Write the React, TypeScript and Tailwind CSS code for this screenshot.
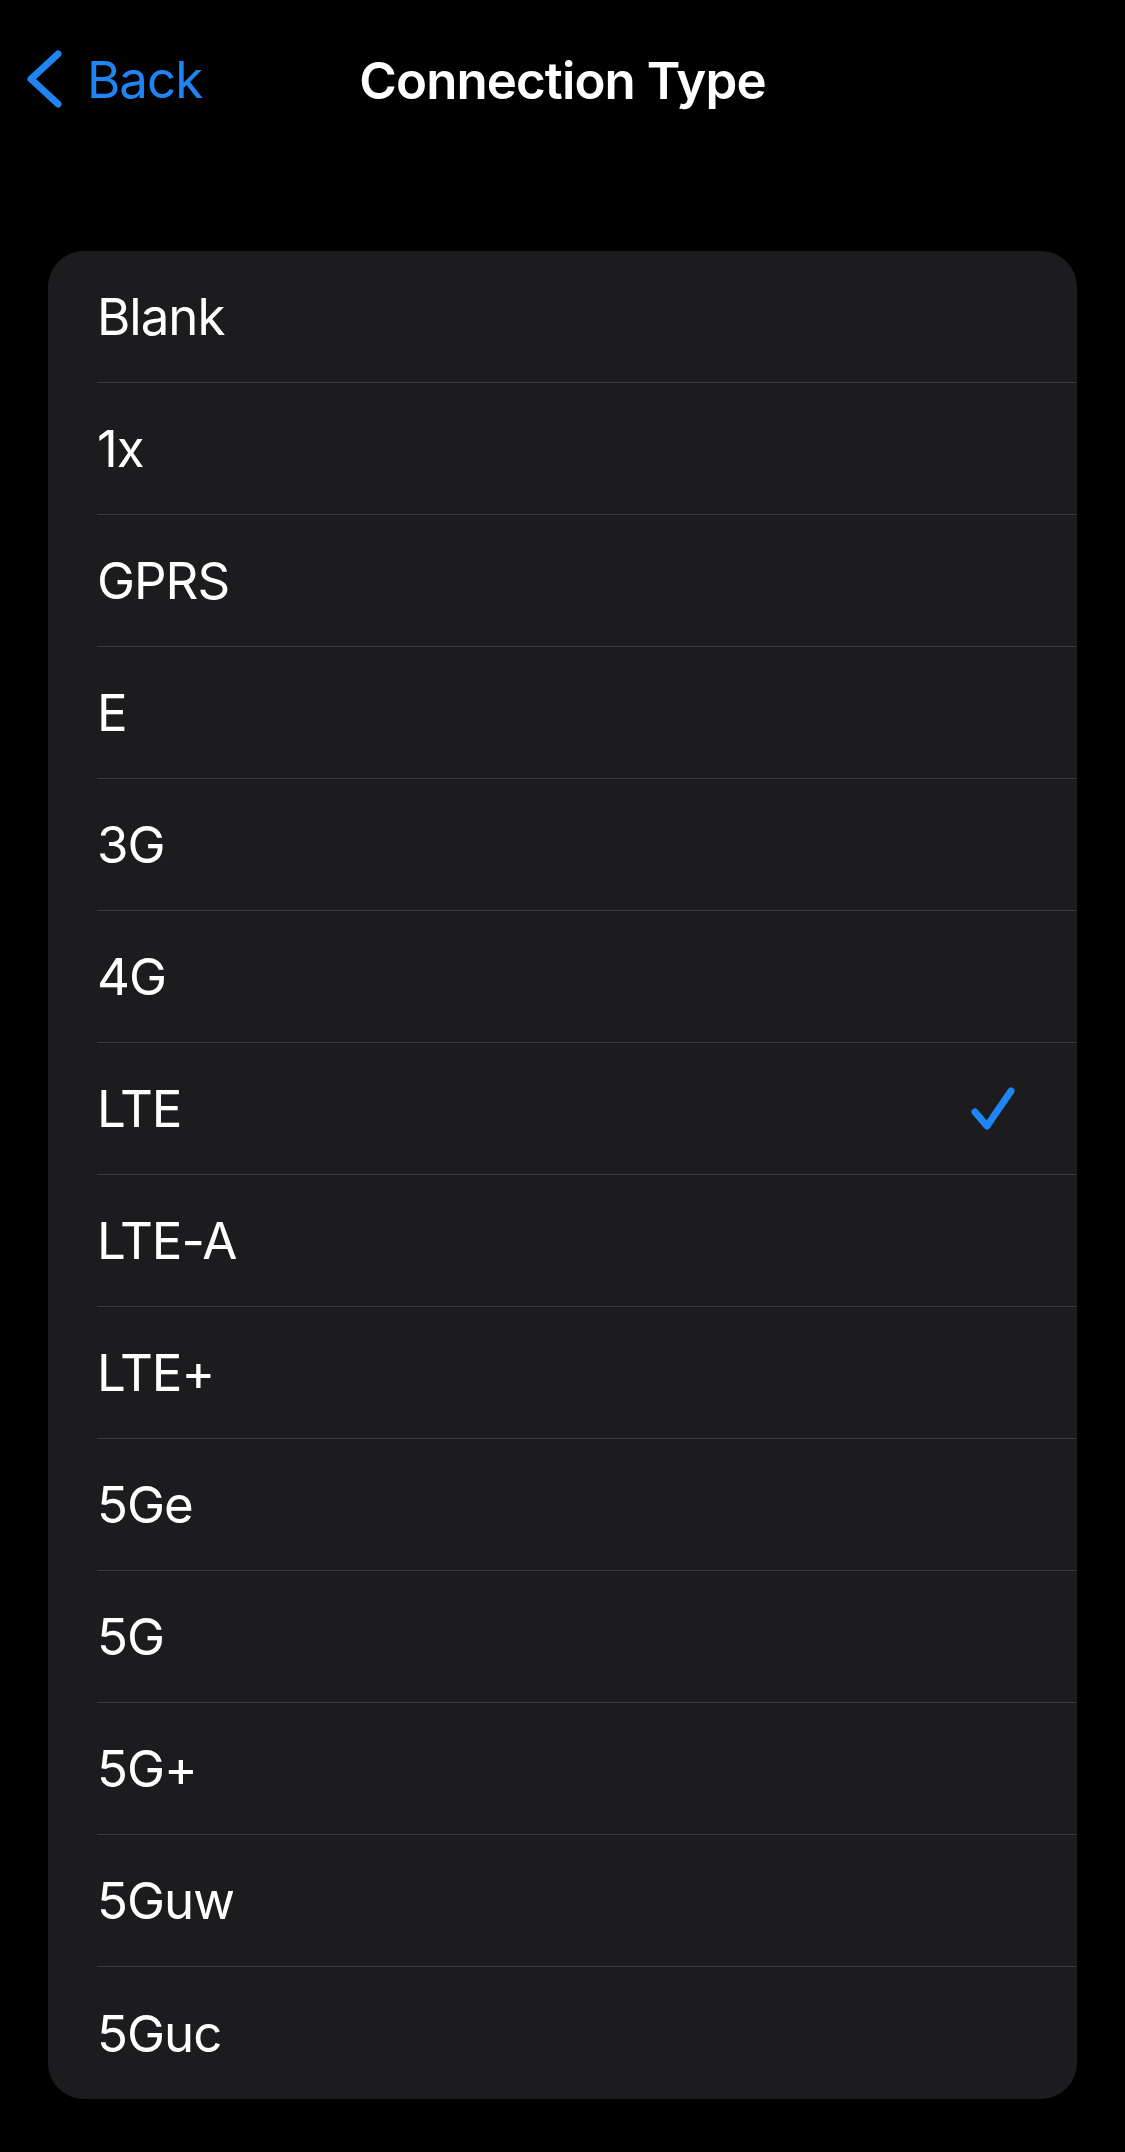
import React from 'react';

const options = ['Blank', '1x', 'GPRS', 'E', '3G', '4G', 'LTE', 'LTE-A', 'LTE+', '5Ge', '5G', '5G+', '5Guw', '5Guc'];

const selected = 'LTE';

const App: React.FC = () => {
    return (
        <div className="min-h-[2152px] w-[1125px] bg-black text-white font-['Inter',sans-serif]">
            {/* nav bar */}
            <div className="relative h-[160px] flex items-center justify-center">
                <div className="absolute left-[24px] top-[46px] flex items-center text-[#1f85f5]">
                    <svg width="40" height="66" viewBox="0 0 40 66" fill="none">
                        <polyline
                            points="34,8 7,33 34,58"
                            stroke="currentColor"
                            strokeWidth="7"
                            strokeLinecap="round"
                            strokeLinejoin="round"
                        />
                    </svg>
                    <span className="ml-[23px] text-[51px] leading-none tracking-[-1px]">Back</span>
                </div>
                <h1 className="text-[51px] leading-none font-semibold tracking-[-0.9px]">Connection Type</h1>
            </div>

            <div className="pt-[91px] px-[48px]">
                <div className="bg-[#1c1c1e] rounded-[36px] overflow-hidden">
                    {options.map((opt, i) => (
                        <div key={opt} className="pl-[49px]">
                            <div
                                className={
                                    'h-[132px] flex items-center justify-between pr-[61px] ' +
                                    (i < options.length - 1 ? 'border-b border-[#3a3a3c]' : '')
                                }
                            >
                                <span className="text-[51px] leading-none tracking-[-1px]">{opt}</span>
                                {opt === selected && (
                                    <svg width="46" height="46" viewBox="0 0 46 46" fill="none">
                                        <polyline
                                            points="5,26 17,40 41,5"
                                            stroke="#1f85f5"
                                            strokeWidth="7"
                                            strokeLinecap="round"
                                            strokeLinejoin="round"
                                        />
                                    </svg>
                                )}
                            </div>
                        </div>
                    ))}
                </div>
            </div>
        </div>
    );
};

export default App;
